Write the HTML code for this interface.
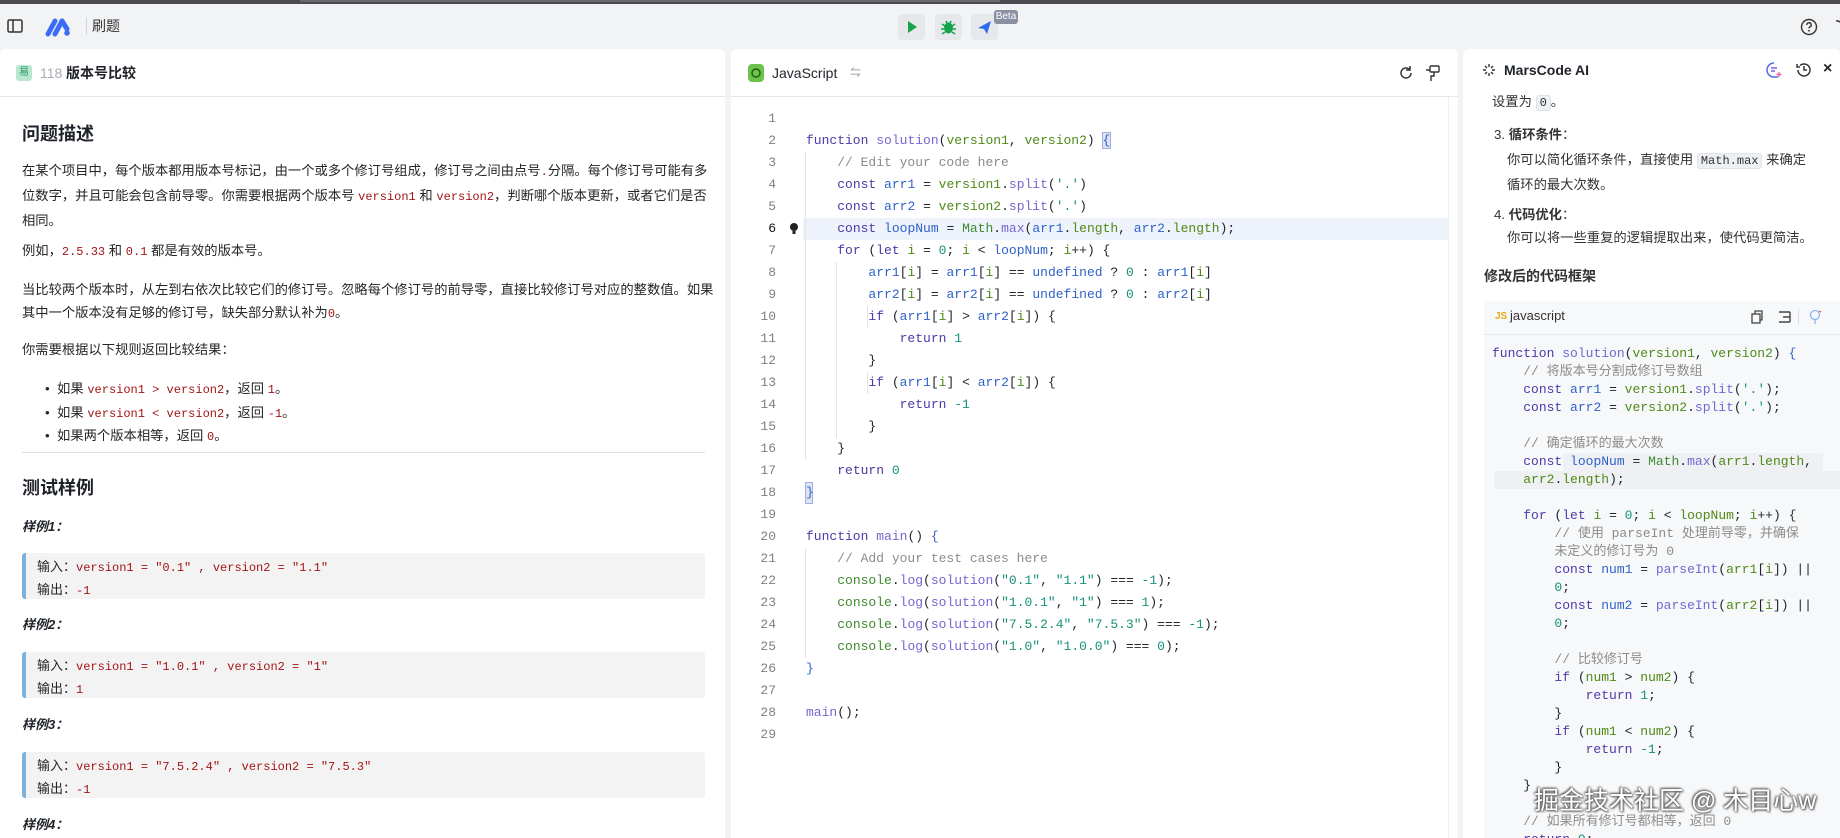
<!DOCTYPE html>
<html><head><meta charset="utf-8"><style>
*{box-sizing:border-box;margin:0;padding:0}
body{width:1840px;height:838px;overflow:hidden;background:#f2f3f5;font-family:"Liberation Sans","Noto Sans CJK SC",sans-serif;color:#1f2329;position:relative}
.abs{position:absolute}
.topbar{left:0;top:0;width:1840px;height:4px;background:#4b4b4f}
.mono{font-family:"Liberation Mono","Noto Sans CJK SC",monospace}
.panel{background:#fff;position:absolute;top:49px;height:789px;border-radius:6px 6px 0 0;overflow:hidden}
.ph{position:absolute;left:0;top:0;width:100%;height:48px;border-bottom:1px solid #e4e6ea}
.t{position:absolute;white-space:nowrap;font-size:14px;line-height:20px}
.lt{font-size:13.3px}
.red{color:#a31515;font-family:"Liberation Mono",monospace;font-size:12px}
.box{position:absolute;left:22px;width:683px;height:46px;background:#f3f3f3;border-left:4px solid #7eb2db;border-radius:3px}
.code{position:absolute;font-family:"Liberation Mono","Noto Sans CJK SC",monospace;font-size:13px;white-space:pre}
.ln{position:absolute;left:0;width:60px;text-align:right;color:#7b8088;font-family:"Liberation Mono",monospace;font-size:13px}
.k{color:#4b3aa8}.f{color:#7566d2}.p{color:#4e8a17}.v{color:#2f62c9}.n{color:#16917a}.c{color:#8c8c8c}.s{color:#16917a}.m{color:#3f8a2e}.o{color:#333}
.btn{position:absolute;top:14px;width:27px;height:26px;background:#e6e8ec;border-radius:4px}
</style></head><body>
<div class="abs topbar"></div>
<div class="abs" style="left:300px;top:0;width:700px;height:2px;background:#6a6a70"></div>
<svg class="abs" style="left:6px;top:17px" width="18" height="18" viewBox="0 0 18 18"><rect x="2" y="3" width="14" height="12" rx="1.5" fill="none" stroke="#333" stroke-width="1.5"/><line x1="7" y1="3" x2="7" y2="15" stroke="#333" stroke-width="1.5"/></svg>
<svg class="abs" style="left:45px;top:17px" width="28" height="20" viewBox="0 0 28 20"><path d="M3 17 L10 4 M10 17 L17 4" stroke="#3b6cf6" stroke-width="5" stroke-linecap="round"/><circle cx="22" cy="16" r="2.8" fill="#3b6cf6"/><path d="M17 4 L22 12" stroke="#3b6cf6" stroke-width="5" stroke-linecap="round"/></svg>
<div class="abs" style="left:86px;top:17px;width:1px;height:18px;background:#d0d3d8"></div>
<div class="t" style="left:92px;top:16px;font-size:14px;color:#333">刷题</div>
<div class="btn" style="left:898px"><svg width="27" height="26"><path d="M10 7 L19 13 L10 19Z" fill="#16a34a"/></svg></div>
<div class="btn" style="left:935px"><svg width="27" height="26"><ellipse cx="13.5" cy="14" rx="4.5" ry="5.5" fill="#16a34a"/><path d="M7 10l3 2M20 10l-3 2M6 15h3M21 15h-3M7 20l3-2M20 20l-3-2M11 7l1 2M16 7l-1 2" stroke="#16a34a" stroke-width="1.6"/></svg></div>
<div class="btn" style="left:971px"><svg width="27" height="26"><path d="M7 14 L20 7 L16 20 L13 15Z" fill="#2f6bf2"/></svg></div>
<div class="abs" style="left:994px;top:10px;width:24px;height:14px;background:#8a90a2;border-radius:3px;color:#fff;font-size:10px;line-height:14px;text-align:center">Beta</div>
<svg class="abs" style="left:1800px;top:18px" width="18" height="18" viewBox="0 0 18 18"><circle cx="9" cy="9" r="7.5" fill="none" stroke="#333" stroke-width="1.4"/><path d="M6.8 7a2.2 2.2 0 1 1 3 2c-.6.3-.8.7-.8 1.4" fill="none" stroke="#333" stroke-width="1.4"/><circle cx="9" cy="12.8" r=".9" fill="#333"/></svg>
<svg class="abs" style="left:1832px;top:18px" width="10" height="18"><path d="M4 3 a5 5 0 0 1 6 5v5" fill="none" stroke="#333" stroke-width="1.4"/></svg>

<div class="panel" style="left:0;width:725px">
 <div class="ph"></div>
 <div class="abs" style="left:16px;top:16px;width:16px;height:16px;background:#b9e6cf;border-radius:3px;color:#2a9d63;font-size:10px;line-height:16px;text-align:center">易</div>
 <div class="t" style="left:40px;top:14px;font-size:14px;color:#a8acb2">118</div>
 <div class="t" style="left:66px;top:14px;font-size:14px;font-weight:bold;color:#1f2329">版本号比较</div>
 <div class="t" style="left:22px;top:73px;font-size:18px;line-height:24px;font-weight:bold">问题描述</div>
 <div class="t lt" style="left:22px;top:110px;line-height:23px;color:#262626">在某个项目中，每个版本都用版本号标记，由一个或多个修订号组成，修订号之间由点号<span class="red">.</span>分隔。每个修订号可能有多<br>位数字，并且可能会包含前导零。你需要根据两个版本号 <span class="red">version1</span> 和 <span class="red">version2</span>，判断哪个版本更新，或者它们是否<br>相同。</div>
 <div class="t lt" style="left:22px;top:192px;color:#262626">例如，<span class="red">2.5.33</span> 和 <span class="red">0.1</span> 都是有效的版本号。</div>
 <div class="t lt" style="left:22px;top:229px;line-height:23px;color:#262626">当比较两个版本时，从左到右依次比较它们的修订号。忽略每个修订号的前导零，直接比较修订号对应的整数值。如果<br>其中一个版本没有足够的修订号，缺失部分默认补为<span class="red">0</span>。</div>
 <div class="t lt" style="left:22px;top:291px;color:#262626">你需要根据以下规则返回比较结果：</div>
 <div class="t lt" style="left:45px;top:329px;line-height:21.5px;color:#262626">•&nbsp;&nbsp;如果 <span class="red">version1 &gt; version2</span>，返回 <span class="red">1</span>。<br>•&nbsp;&nbsp;如果 <span class="red">version1 &lt; version2</span>，返回 <span class="red">-1</span>。<br>•&nbsp;&nbsp;如果两个版本相等，返回 <span class="red">0</span>。</div>
 <div class="abs" style="left:22px;top:403px;width:683px;height:1px;background:#dcdfe3"></div>
 <div class="t" style="left:22px;top:427px;font-size:18px;line-height:24px;font-weight:bold">测试样例</div>
 <div class="t" style="left:22px;top:468px;font-size:13px;font-weight:bold;font-style:italic">样例1：</div>
 <div class="box" style="top:504px"></div>
 <div class="t" style="left:37px;top:507px;line-height:21px;font-size:13px;color:#262626">输入：<span class="red">version1 = "0.1" , version2 = "1.1"</span><br>输出：<span class="red">-1</span></div>
 <div class="t" style="left:22px;top:566px;font-size:13px;font-weight:bold;font-style:italic">样例2：</div>
 <div class="box" style="top:603px"></div>
 <div class="t" style="left:37px;top:606px;line-height:21px;font-size:13px;color:#262626">输入：<span class="red">version1 = "1.0.1" , version2 = "1"</span><br>输出：<span class="red">1</span></div>
 <div class="t" style="left:22px;top:666px;font-size:13px;font-weight:bold;font-style:italic">样例3：</div>
 <div class="box" style="top:703px"></div>
 <div class="t" style="left:37px;top:706px;line-height:21px;font-size:13px;color:#262626">输入：<span class="red">version1 = "7.5.2.4" , version2 = "7.5.3"</span><br>输出：<span class="red">-1</span></div>
 <div class="t" style="left:22px;top:766px;font-size:13px;font-weight:bold;font-style:italic">样例4：</div>
</div>

<div class="panel" style="left:731px;width:727px">
 <div class="ph"></div>
 <div class="abs" style="left:17px;top:15px;width:16px;height:18px;background:#6cc24a;border-radius:4px"><svg width="16" height="18"><circle cx="8" cy="9" r="4" fill="none" stroke="#1d5c12" stroke-width="1.4"/></svg></div>
 <div class="t" style="left:41px;top:14px;font-size:14px;color:#1f2329">JavaScript</div>
 <div class="t" style="left:119px;top:14px;font-size:11px;color:#888">⇋</div>
 <svg class="abs" style="left:666px;top:15px" width="18" height="18" viewBox="0 0 18 18"><path d="M14 9a5 5 0 1 1-1.5-3.6" fill="none" stroke="#333" stroke-width="1.5"/><path d="M13 2v4h-4" fill="none" stroke="#333" stroke-width="1.5"/></svg>
 <svg class="abs" style="left:693px;top:15px" width="18" height="18" viewBox="0 0 18 18"><rect x="6" y="2" width="9" height="6" rx="1" fill="none" stroke="#333" stroke-width="1.4"/><path d="M10 8v4H7v5M2 6h4" fill="none" stroke="#333" stroke-width="1.4"/></svg>
 <div class="abs" style="left:72px;top:169px;width:645px;height:22px;background:#eef2fb"></div>
 <div class="abs" style="left:74px;top:103px;width:1px;height:308px;background:#e3e5e8"></div>
 <div class="abs" style="left:105px;top:213px;width:1px;height:176px;background:#e3e5e8"></div>
 <div class="abs" style="left:136px;top:257px;width:1px;height:22px;background:#e3e5e8"></div>
 <div class="abs" style="left:136px;top:323px;width:1px;height:22px;background:#e3e5e8"></div>
 <div class="abs" style="left:74px;top:499px;width:1px;height:110px;background:#e3e5e8"></div>
 <div class="abs" style="left:74px;top:433px;width:8px;height:22px;background:#dde3f3;border:1px solid #9fb0dc"></div>
 <svg class="abs" style="left:58px;top:173px" width="10" height="14"><circle cx="5" cy="5" r="4" fill="#222"/><rect x="3.5" y="9" width="3" height="3" fill="#222"/></svg>
 <div class="ln" style="top:59px;line-height:22px;width:45px;white-space:pre">1
2
3
4
5
<span style="color:#111">6</span>
7
8
9
10
11
12
13
14
15
16
17
18
19
20
21
22
23
24
25
26
27
28
29</div>
 <div class="code" style="left:75px;top:59px;line-height:22px">
<span class="k">function</span> <span class="f">solution</span>(<span class="p">version1</span>, <span class="p">version2</span>) <span class="v" style="background:#dde3f3;outline:1px solid #9fb0dc">{</span>
    <span class="c">// Edit your code here</span>
    <span class="k">const</span> <span class="v">arr1</span> = <span class="p">version1</span>.<span class="f">split</span>(<span class="s">'.'</span>)
    <span class="k">const</span> <span class="v">arr2</span> = <span class="p">version2</span>.<span class="f">split</span>(<span class="s">'.'</span>)
    <span class="k">const</span> <span class="v">loopNum</span> = <span class="m">Math</span>.<span class="f">max</span>(<span class="v">arr1</span>.<span class="p">length</span>, <span class="v">arr2</span>.<span class="p">length</span>);
    <span class="k">for</span> (<span class="k">let</span> <span class="p">i</span> = <span class="n">0</span>; <span class="p">i</span> &lt; <span class="v">loopNum</span>; <span class="p">i</span>++) {
        <span class="v">arr1</span>[<span class="p">i</span>] = <span class="v">arr1</span>[<span class="p">i</span>] == <span class="v">undefined</span> ? <span class="n">0</span> : <span class="v">arr1</span>[<span class="p">i</span>]
        <span class="v">arr2</span>[<span class="p">i</span>] = <span class="v">arr2</span>[<span class="p">i</span>] == <span class="v">undefined</span> ? <span class="n">0</span> : <span class="v">arr2</span>[<span class="p">i</span>]
        <span class="k">if</span> (<span class="v">arr1</span>[<span class="p">i</span>] &gt; <span class="v">arr2</span>[<span class="p">i</span>]) {
            <span class="k">return</span> <span class="n">1</span>
        }
        <span class="k">if</span> (<span class="v">arr1</span>[<span class="p">i</span>] &lt; <span class="v">arr2</span>[<span class="p">i</span>]) {
            <span class="k">return</span> <span class="n">-1</span>
        }
    }
    <span class="k">return</span> <span class="n">0</span>
<span class="v">}</span>

<span class="k">function</span> <span class="f">main</span>() <span class="v">{</span>
    <span class="c">// Add your test cases here</span>
    <span class="m">console</span>.<span class="f">log</span>(<span class="f">solution</span>(<span class="s">"0.1"</span>, <span class="s">"1.1"</span>) === <span class="n">-1</span>);
    <span class="m">console</span>.<span class="f">log</span>(<span class="f">solution</span>(<span class="s">"1.0.1"</span>, <span class="s">"1"</span>) === <span class="n">1</span>);
    <span class="m">console</span>.<span class="f">log</span>(<span class="f">solution</span>(<span class="s">"7.5.2.4"</span>, <span class="s">"7.5.3"</span>) === <span class="n">-1</span>);
    <span class="m">console</span>.<span class="f">log</span>(<span class="f">solution</span>(<span class="s">"1.0"</span>, <span class="s">"1.0.0"</span>) === <span class="n">0</span>);
<span class="v">}</span>

<span class="f">main</span>();
</div>
 <div class="abs" style="left:717px;top:48px;width:1px;height:741px;background:#eceef1"></div>
</div>

<div class="panel" style="left:1463px;width:377px">
 <svg class="abs" style="left:18px;top:13px" width="16" height="16" viewBox="0 0 16 16"><path d="M8 2v3M8 11v3M2 8h3M11 8h3M4 4l2 2M10 10l2 2M12 4l-2 2M4 12l2-2" stroke="#333" stroke-width="1.4"/></svg>
 <div class="t" style="left:41px;top:11px;font-size:14px;font-weight:bold">MarsCode AI</div>
 <svg class="abs" style="left:302px;top:12px" width="18" height="18" viewBox="0 0 18 18"><path d="M9 2a7 7 0 1 0 0 14H13" fill="none" stroke="#4b6cf0" stroke-width="1.5"/><path d="M6 7h6M6 10h4" stroke="#7a5cf0" stroke-width="1.4"/><path d="M14 11v5M11.5 13.5h5" stroke="#f0609a" stroke-width="1.4"/></svg>
 <svg class="abs" style="left:332px;top:12px" width="18" height="18" viewBox="0 0 18 18"><path d="M3 9a6 6 0 1 0 2-4.5" fill="none" stroke="#333" stroke-width="1.5"/><path d="M2 3v3h3M9 5v4h3" fill="none" stroke="#333" stroke-width="1.5"/></svg>
 <div class="t" style="left:360px;top:10px;font-size:16px;font-weight:bold">×</div>
 <div class="t lt" style="left:29px;top:43px;color:#333">设置为 <span class="mono" style="background:#eef0f3;border:1px solid #dfe2e6;border-radius:3px;padding:0 3px;font-size:12px">0</span>。</div>
 <div class="t lt" style="left:31px;top:76px;color:#333">3. <b>循环条件</b>：</div>
 <div class="t lt" style="left:44px;top:99px;line-height:24px;color:#333">你可以简化循环条件，直接使用 <span class="mono" style="background:#eef0f3;border:1px solid #dfe2e6;border-radius:3px;padding:0 3px;font-size:12px">Math.max</span> 来确定<br>循环的最大次数。</div>
 <div class="t lt" style="left:31px;top:156px;color:#333">4. <b>代码优化</b>：</div>
 <div class="t lt" style="left:44px;top:179px;color:#333">你可以将一些重复的逻辑提取出来，使代码更简洁。</div>
 <div class="t" style="left:21px;top:217px;font-weight:bold;color:#333">修改后的代码框架</div>
 <div class="abs" style="left:21px;top:252px;width:356px;height:537px;background:#f7f8fa;border-radius:6px 0 0 0"></div>
 <div class="abs" style="left:21px;top:285px;width:356px;height:1px;background:#e6e8eb"></div>
 <div class="t" style="left:32px;top:258px;font-size:10px;color:#e6a817;font-weight:bold">JS</div>
 <div class="t" style="left:47px;top:257px;font-size:13px;color:#333">javascript</div>
 <svg class="abs" style="left:287px;top:261px" width="14" height="14"><rect x="2" y="4" width="8" height="9" fill="none" stroke="#444" stroke-width="1.3"/><path d="M5 4V1h7v9h-2" fill="none" stroke="#444" stroke-width="1.3"/></svg>
 <svg class="abs" style="left:314px;top:261px" width="14" height="14"><path d="M2 2h11M6 7h7M2 12h11M13 2v10" fill="none" stroke="#444" stroke-width="1.4"/></svg>
 <div class="abs" style="left:335px;top:260px;width:1px;height:15px;background:#ddd"></div>
 <svg class="abs" style="left:346px;top:260px" width="14" height="16"><circle cx="6" cy="6" r="4.5" fill="none" stroke="#8ab4f8" stroke-width="1.3"/><path d="M6 11v4" stroke="#8ab4f8" stroke-width="1.3"/><path d="M10 2l2 1" stroke="#f06060" stroke-width="1.3"/></svg>
 <div class="abs" style="left:100px;top:404px;width:260px;height:18px;background:#eef0f3"></div>
 <div class="abs" style="left:31px;top:422px;width:346px;height:18px;background:#eef0f3"></div>
 <div class="code" style="left:29px;top:296px;line-height:18px"><span class="k">function</span> <span class="f">solution</span>(<span class="p">version1</span>, <span class="p">version2</span>) <span class="v">{</span>
    <span class="c">// 将版本号分割成修订号数组</span>
    <span class="k">const</span> <span class="v">arr1</span> = <span class="p">version1</span>.<span class="f">split</span>(<span class="s">'.'</span>);
    <span class="k">const</span> <span class="v">arr2</span> = <span class="p">version2</span>.<span class="f">split</span>(<span class="s">'.'</span>);

    <span class="c">// 确定循环的最大次数</span>
    <span class="k">const</span> <span class="v">loopNum</span> = <span class="m">Math</span>.<span class="f">max</span>(<span class="p">arr1</span>.<span class="p">length</span>,
    <span class="p">arr2</span>.<span class="p">length</span>);

    <span class="k">for</span> (<span class="k">let</span> <span class="p">i</span> = <span class="n">0</span>; <span class="p">i</span> &lt; <span class="p">loopNum</span>; <span class="p">i</span>++) <span class="o">{</span>
        <span class="c">// 使用 parseInt 处理前导零，并确保</span>
        <span class="c">未定义的修订号为 0</span>
        <span class="k">const</span> <span class="v">num1</span> = <span class="f">parseInt</span>(<span class="p">arr1</span>[<span class="p">i</span>]) ||
        <span class="n">0</span>;
        <span class="k">const</span> <span class="v">num2</span> = <span class="f">parseInt</span>(<span class="p">arr2</span>[<span class="p">i</span>]) ||
        <span class="n">0</span>;

        <span class="c">// 比较修订号</span>
        <span class="k">if</span> (<span class="p">num1</span> &gt; <span class="p">num2</span>) {
            <span class="k">return</span> <span class="n">1</span>;
        }
        <span class="k">if</span> (<span class="p">num1</span> &lt; <span class="p">num2</span>) {
            <span class="k">return</span> <span class="n">-1</span>;
        }
    }

    <span class="c">// 如果所有修订号都相等，返回 0</span>
    <span class="k">return</span> <span class="n">0</span>;
</div>
</div>
<div class="abs" style="left:1534px;top:785px;font-size:25px;line-height:32px;color:#fff;white-space:nowrap;text-shadow:0 0 2px #555,1px 1px 2px #555,-1px -1px 2px #555">掘金技术社区 @ 木目心w</div>
</body></html>
